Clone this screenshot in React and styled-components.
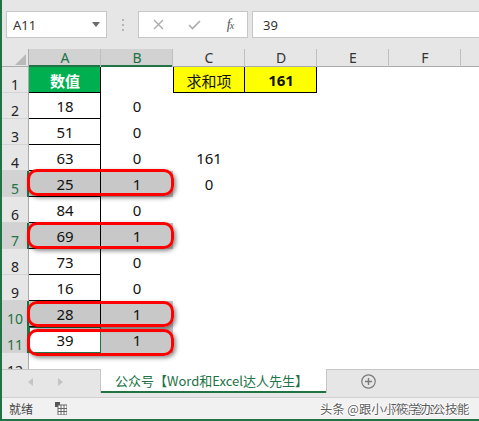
import React from 'react';
import styled, { createGlobalStyle } from 'styled-components';

const GREEN = '#217346';
const UI_FONT = '"Noto Sans", "Noto Sans CJK SC", sans-serif';
const CJK_FONT = '"Noto Sans CJK SC", "Noto Sans", sans-serif';

const Global = createGlobalStyle`
  html, body { margin: 0; padding: 0; }
  body {
    width: 479px; height: 421px; overflow: hidden; background: #fff;
    font-family: ${UI_FONT};
  }
`;

const Window = styled.div`
  width: 479px; height: 421px; box-sizing: border-box;
  border-left: 2px solid ${GREEN};
  border-bottom: 2px solid ${GREEN};
  display: flex; flex-direction: column;
  overflow: hidden; background: #e6e6e6;
`;

/* ---------- formula bar ---------- */
const FormulaBar = styled.div`
  height: 49px; flex-shrink: 0; box-sizing: border-box;
  padding: 11px 0 0 4px;
  display: flex; align-items: flex-start;
`;

const NameBox = styled.div`
  width: 101px; height: 27px; box-sizing: border-box; flex-shrink: 0;
  background: #fff; border: 1px solid #c6c6c6;
  display: flex; align-items: center; justify-content: space-between;
  padding: 0 6px 0 6px;
  font-size: 13px; color: #333;
`;

const Dots = styled.div`
  width: 31px; height: 27px; flex-shrink: 0;
  display: flex; flex-direction: column; align-items: center; justify-content: center; gap: 3px;
  & > span { width: 2px; height: 2px; background: #b4b4b4; display: block; }
`;

const FxBox = styled.div`
  width: 110px; height: 27px; box-sizing: border-box; flex-shrink: 0;
  background: #fff; border: 1px solid #c6c6c6;
  display: grid; grid-template-columns: repeat(3, 36px);
  padding-left: 1px;
  align-items: center; justify-items: center;
`;

const FxLabel = styled.span`
  font-family: "Liberation Serif", serif; font-style: italic;
  font-size: 14px; color: #555; letter-spacing: -1px;
  & > small { font-size: 10px; }
`;

const FormulaInput = styled.div`
  width: 240px; height: 27px; box-sizing: border-box; flex-shrink: 0;
  margin-left: 4px; background: #fff; border: 1px solid #c6c6c6;
  display: flex; align-items: center; padding-left: 10px;
  font-size: 13px; color: #333;
`;

/* ---------- sheet ---------- */
const Sheet = styled.div`
  height: 320px; flex-shrink: 0; background: #fff; overflow: hidden;
`;

const Line = styled.div`
  display: flex; height: ${p => p.$h}px; flex-shrink: 0;
`;

const Corner = styled.div`
  width: 27px; flex-shrink: 0; box-sizing: border-box;
  background: #e6e6e6;
  box-shadow: inset -1px 0 #ababab, inset 0 -1px #ababab;
  display: flex; align-items: flex-end; justify-content: flex-end;
  padding: 0 3px 2px 0;
`;

const Triangle = styled.span`
  width: 11px; height: 11px; display: block; background: #b9b9b9;
  clip-path: polygon(100% 0, 100% 100%, 0 100%);
`;

const ColHeader = styled.div`
  width: 72px; flex-shrink: 0; box-sizing: border-box;
  background: ${p => (p.$sel ? '#d2d2d2' : '#e6e6e6')};
  color: ${p => (p.$sel ? GREEN : '#333')};
  box-shadow: inset -1px 0 #bfbfbf,
    ${p => (p.$sel ? `inset 0 -2px ${GREEN}` : 'inset 0 -1px #ababab')};
  display: flex; align-items: center; justify-content: center;
  font-size: 14px; padding-bottom: 1px;
`;

const RowHeader = styled.div`
  width: 27px; flex-shrink: 0; box-sizing: border-box;
  background: ${p => (p.$sel ? '#d2d2d2' : '#e6e6e6')};
  color: ${p => (p.$sel ? GREEN : '#222')};
  box-shadow: ${p => (p.$sel ? `inset -2px 0 ${GREEN}` : 'inset -1px 0 #ababab')},
    inset 0 -1px #d4d4d4;
  display: flex; align-items: flex-end; justify-content: center;
  font-size: 14px; line-height: 1; padding: 0 1px 1px 0;
`;

const Cell = styled.div`
  width: 72px; flex-shrink: 0; box-sizing: border-box; position: relative;
  background: ${p => p.$bg || 'transparent'};
  box-shadow: ${p => p.$lines || 'none'};
  display: flex; align-items: center; justify-content: center;
  font-family: ${p => (p.$cjk ? CJK_FONT : UI_FONT)};
  font-size: 15px;
  font-weight: ${p => (p.$bold ? 700 : 400)};
  color: ${p => p.$color || '#111'};
`;

const Ring = styled.span`
  position: absolute; left: -2px; z-index: 2;
  width: 147px; box-sizing: border-box;
  border: 3px solid #ff0000; border-radius: 10px;
  box-shadow: 2px 2px 4px rgba(0, 0, 0, 0.45);
  pointer-events: none;
`;

/* ---------- tabs ---------- */
const TabBar = styled.div`
  height: 28px; flex-shrink: 0; box-sizing: border-box;
  border-top: 1px solid #c6c6c6; background: #e6e6e6;
  display: flex; align-items: flex-start;
`;

const TabNav = styled.div`
  width: 99px; height: 23px; flex-shrink: 0; box-sizing: border-box;
  border-right: 1px solid #c6c6c6;
  display: flex; align-items: center; gap: 25px; padding-left: 26px;
`;

const Tab = styled.div`
  width: 225px; height: 24px; margin-top: -1px; flex-shrink: 0; box-sizing: border-box;
  background: #fff; border-bottom: 2px solid ${GREEN};
  display: flex; align-items: center; padding-left: 14px;
  font-family: ${CJK_FONT}; font-size: 13px; color: ${GREEN}; white-space: nowrap;
`;

const TabRest = styled.div`
  flex: 1; height: 23px; box-sizing: border-box;
  border-left: 1px solid #c6c6c6;
  display: flex; align-items: center; padding-left: 34px;
`;

/* ---------- status bar ---------- */
const StatusBar = styled.div`
  height: 22px; flex-shrink: 0; box-sizing: border-box; position: relative;
  border-top: 1px solid #d0d0d0; background: #f1f1f1;
  display: flex; align-items: center; padding-left: 7px;
  font-family: ${CJK_FONT}; font-size: 12px; color: #444; white-space: nowrap;
`;

const MacroIcon = styled.svg`
  margin-left: 22px; flex-shrink: 0;
`;

const StatusValue = styled.span`
  margin-left: auto; width: 92px; flex-shrink: 0; color: #555;
`;

const Watermark = styled.span`
  position: absolute; left: 318px; top: 2px;
  font-family: ${CJK_FONT}; font-size: 12.3px; letter-spacing: 0;
  color: #5c5c5c;
  text-shadow: 0 0 1px #fff, 1px 0 0 #fff, -1px 0 0 #fff, 0 1px 0 #fff, 0 -1px 0 #fff;
`;

/* ---------- data ---------- */
const COLS = ['A', 'B', 'C', 'D', 'E', 'F', 'G'];
const SEL_COLS = ['A', 'B'];
const ROWS = [
  { n: 1 },
  { n: 2, a: 18, b: 0 },
  { n: 3, a: 51, b: 0 },
  { n: 4, a: 63, b: 0, c: 161 },
  { n: 5, a: 25, b: 1, c: 0, sel: true, ring: [-2, 27] },
  { n: 6, a: 84, b: 0 },
  { n: 7, a: 69, b: 1, sel: true, ring: [-1, 27] },
  { n: 8, a: 73, b: 0 },
  { n: 9, a: 16, b: 0 },
  { n: 10, a: 28, b: 1, sel: true, ring: [0, 26] },
  { n: 11, a: 39, b: 1, sel: true, active: true, ring: [2, 27] },
  { n: 12, empty: true },
];

const SEL_BG = '#c8c8c8';
const BLACK_RB = 'inset -1px -1px 0 #000';

function DataRow({ r }) {
  if (r.n === 1) {
    return (
      <Line $h={26}>
        <RowHeader>1</RowHeader>
        <Cell $bg="#00b050" $color="#fff" $bold $cjk $lines={BLACK_RB}>数值</Cell>
        <Cell />
        <Cell $bg="#ffff00" $cjk $lines={`inset 1px 0 0 #000, ${BLACK_RB}`}>求和项</Cell>
        <Cell $bg="#ffff00" $bold $lines={BLACK_RB}>161</Cell>
        <Cell /><Cell /><Cell />
      </Line>
    );
  }
  if (r.empty) {
    return (
      <Line $h={26}>
        <RowHeader>{r.n}</RowHeader>
        {COLS.map(c => <Cell key={c} />)}
      </Line>
    );
  }
  const aBg = r.active ? '#fff' : r.sel ? SEL_BG : undefined;
  const aLines = r.active ? `inset 0 0 0 1px ${GREEN}` : BLACK_RB;
  return (
    <Line $h={26}>
      <RowHeader $sel={r.sel}>{r.n}</RowHeader>
      <Cell $bg={aBg} $lines={aLines}>
        {r.a}
        {r.ring && <Ring style={{ top: r.ring[0], height: r.ring[1] }} />}
      </Cell>
      <Cell $bg={r.sel ? SEL_BG : undefined}>{r.b}</Cell>
      <Cell>{r.c}</Cell>
      <Cell /><Cell /><Cell /><Cell />
    </Line>
  );
}

export default function App() {
  return (
    <>
      <Global />
      <Window>
        <FormulaBar>
          <NameBox>
            <span>A11</span>
            <svg width="8" height="5" viewBox="0 0 8 5"><path d="M0 0H8L4 5Z" fill="#6a6a6a" /></svg>
          </NameBox>
          <Dots><span /><span /><span /></Dots>
          <FxBox>
            <svg width="11" height="11" viewBox="0 0 11 11">
              <path d="M1 1L10 10M10 1L1 10" stroke="#ababab" strokeWidth="1.4" fill="none" />
            </svg>
            <svg width="13" height="10" viewBox="0 0 13 10">
              <path d="M1 5L4.5 8.5L12 1" stroke="#ababab" strokeWidth="1.6" fill="none" />
            </svg>
            <FxLabel>f<small>x</small></FxLabel>
          </FxBox>
          <FormulaInput>39</FormulaInput>
        </FormulaBar>

        <Sheet>
          <Line $h={18}>
            <Corner><Triangle /></Corner>
            {COLS.map(c => (
              <ColHeader key={c} $sel={SEL_COLS.includes(c)}>{c}</ColHeader>
            ))}
          </Line>
          {ROWS.map(r => <DataRow key={r.n} r={r} />)}
        </Sheet>

        <TabBar>
          <TabNav>
            <svg width="5" height="8" viewBox="0 0 5 8"><path d="M5 0V8L0 4Z" fill="#c4c4c4" /></svg>
            <svg width="5" height="8" viewBox="0 0 5 8"><path d="M0 0V8L5 4Z" fill="#c4c4c4" /></svg>
          </TabNav>
          <Tab>公众号【Word和Excel达人先生】</Tab>
          <TabRest>
            <svg width="15" height="15" viewBox="0 0 15 15">
              <circle cx="7.5" cy="7.5" r="6.7" stroke="#7a7a7a" strokeWidth="1.2" fill="none" />
              <path d="M7.5 4V11M4 7.5H11" stroke="#7a7a7a" strokeWidth="1.4" />
            </svg>
          </TabRest>
        </TabBar>

        <StatusBar>
          <span>就绪</span>
          <MacroIcon width="12" height="13" viewBox="0 0 12 13">
            <rect x="0" y="0" width="5" height="5" fill="#555" />
            <rect x="3" y="3" width="9" height="10" fill="#fff" stroke="#666" strokeWidth="1" />
            <path d="M3 6.5H12M3 9.5H12M6 3V13M9 3V13" stroke="#666" strokeWidth="1" />
          </MacroIcon>
          <StatusValue>平均值: 20.625</StatusValue>
          <Watermark>头条 @跟小小筱学办公技能</Watermark>
        </StatusBar>
      </Window>
    </>
  );
}
